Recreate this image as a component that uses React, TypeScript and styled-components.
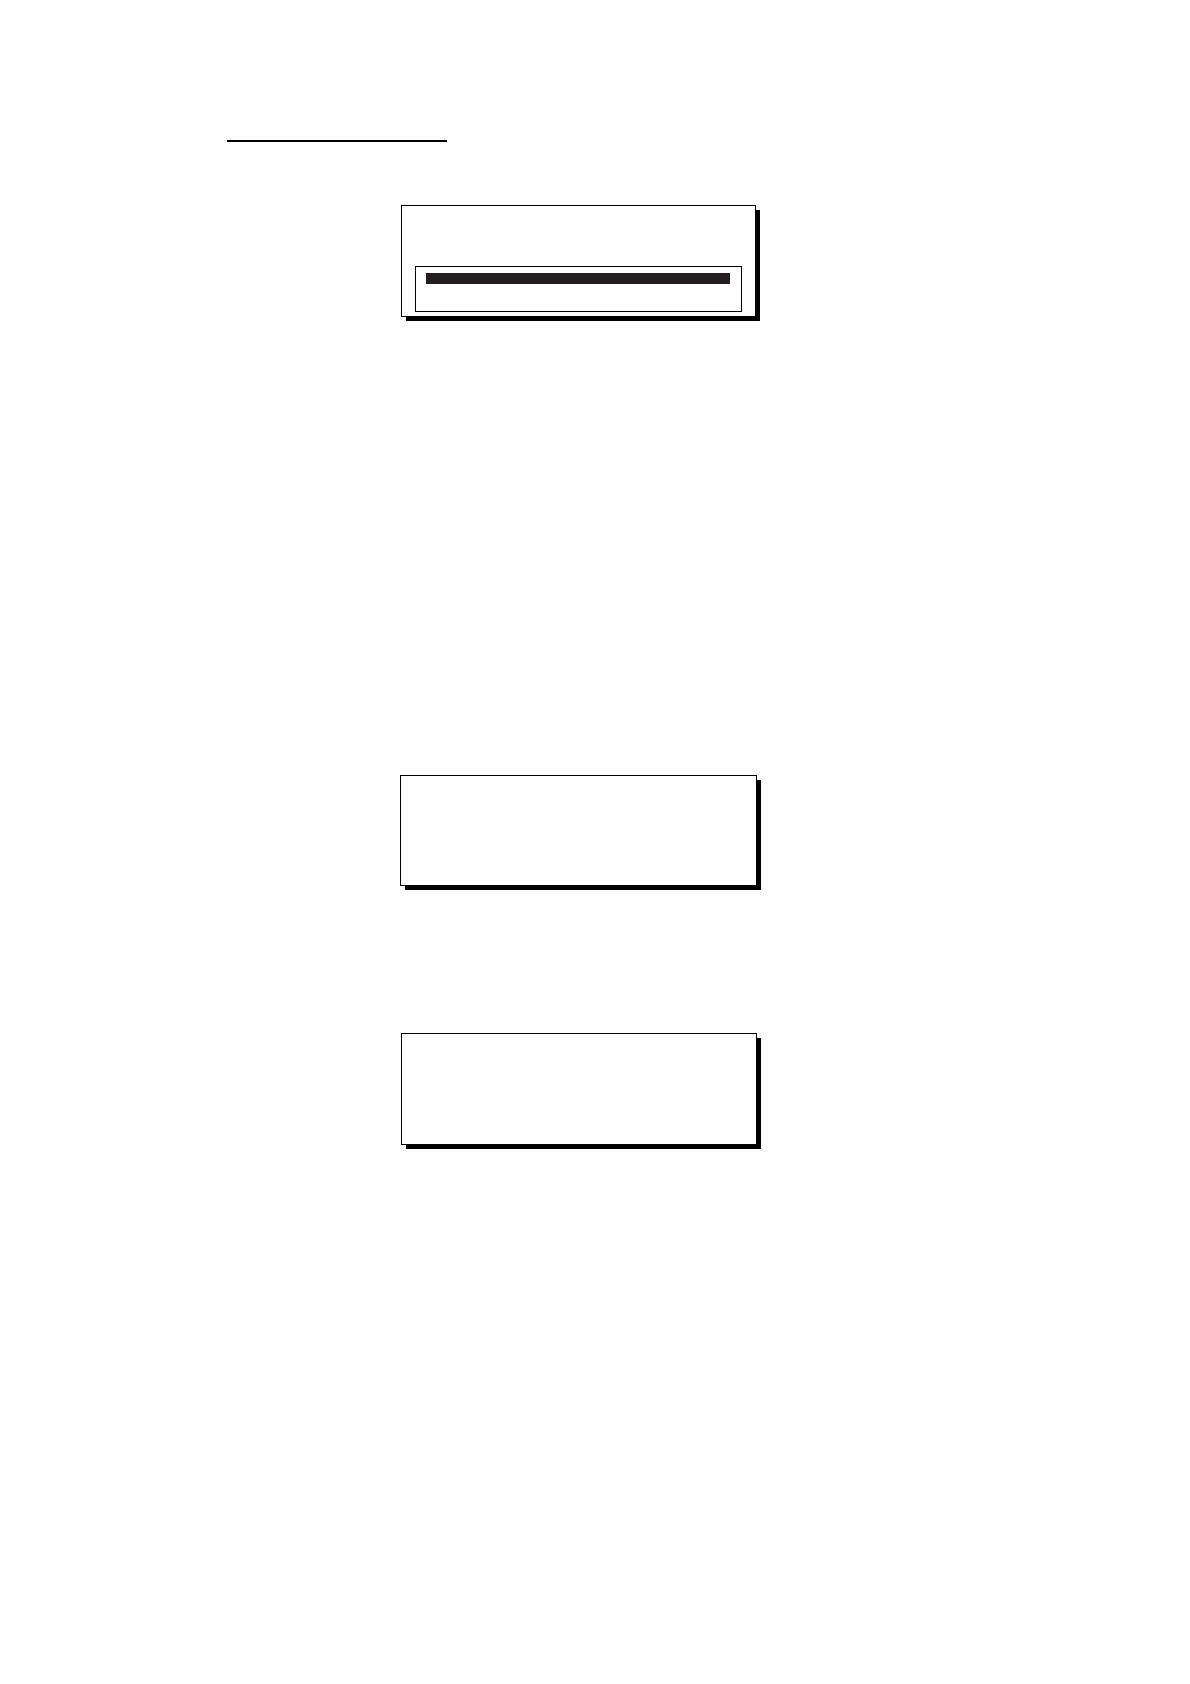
import React from "react";
import styled, { createGlobalStyle } from "styled-components";

const GlobalStyle = createGlobalStyle`
  *, *::before, *::after { box-sizing: border-box; }
  body {
    margin: 0;
    background: #fff;
    font-family: "Liberation Sans", Arial, sans-serif;
  }
`;

const Page = styled.main`
  isolation: isolate;
  display: flex;
  flex-direction: column;
  align-items: center;
  min-height: 100vh;
  padding: 140px 260px 140px 227px;
  background: #fff;
`;

const HeadingRule = styled.hr`
  align-self: flex-start;
  width: 220px;
  height: 2px;
  margin: 0;
  border: 0;
  background: #000;
`;

const Display = styled.section<{ $width: number; $height: number; $gap: number }>`
  position: relative;
  display: flex;
  flex-direction: column;
  justify-content: flex-end;
  width: 100%;
  max-width: ${(p) => p.$width}px;
  min-height: ${(p) => p.$height}px;
  margin-top: ${(p) => p.$gap}px;
  padding: 4px 13px;
  border: 1px solid #000;
  background: #fff;

  /* hard drop shadow behind the panel */
  &::after {
    content: "";
    position: absolute;
    z-index: -1;
    inset: 4px -5px -5px 4px;
    background: #000;
  }
`;

const Options = styled.div`
  min-height: 46px;
  padding: 6px 11px 6px 10px;
  border: 1px solid #000;
`;

const SelectedRow = styled.div`
  height: 11px;
  background: #231f20;
`;

export default function App() {
  return (
    <>
      <GlobalStyle />
      <Page>
        <HeadingRule />
        <Display $width={355} $height={112} $gap={63}>
          <Options>
            <SelectedRow />
          </Options>
        </Display>
        <Display $width={357} $height={111} $gap={458} />
        <Display $width={356} $height={112} $gap={147} />
      </Page>
    </>
  );
}
